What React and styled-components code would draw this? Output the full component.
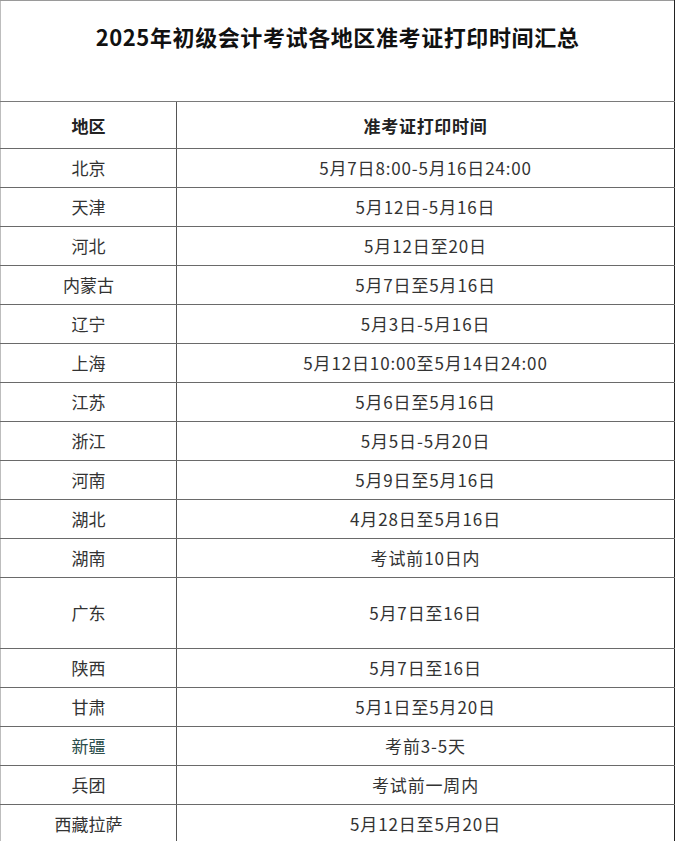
import React from "react"
import styled, { createGlobalStyle } from "styled-components"

const GlobalStyle = createGlobalStyle`
  html, body {
    margin: 0;
    padding: 0;
    background: #ffffff;
  }
  body {
    font-family: "Noto Sans CJK SC", "Noto Sans", sans-serif;
    color: #333333;
  }
`

const Page = styled.div`
  width: 678px;
  height: 841px;
  overflow: hidden;
  background: #ffffff;
`

const Table = styled.table`
  width: 675px;
  border-collapse: collapse;
  table-layout: fixed;
  border-left: 1px solid #bdbdbd;
  border-right: 1px solid #222222;
  border-top: 1px solid #9a9a9a;
`

const TitleCell = styled.th`
  height: 78px;
  padding: 22px 0 0;
  vertical-align: top;
  text-align: center;
  font-size: 22px;
  line-height: 26px;
  font-weight: 700;
  color: #111111;
  letter-spacing: 0.6px;
  border-bottom: 1.5px solid #7a7a7a;
`

const HeadCell = styled.th`
  height: 46px;
  padding: 0;
  text-align: center;
  font-size: 17px;
  font-weight: 600;
  color: #222222;
  letter-spacing: ${(p) => (p.$first ? "0" : "0.7px")};
  border-bottom: 1.5px solid #6a6a6a;
  border-right: ${(p) => (p.$first ? "1.5px solid #555555" : "none")};
`

const Cell = styled.td`
  height: ${(p) => (p.$tall ? "70px" : "38px")};
  padding: 0;
  text-align: center;
  vertical-align: middle;
  font-size: 17px;
  line-height: 20px;
  color: ${(p) => p.$tint || "#333333"};
  letter-spacing: ${(p) => (p.$first ? "0" : "0.85px")};
  border-bottom: 1.5px solid #6a6a6a;
  border-right: ${(p) => (p.$first ? "1.5px solid #555555" : "none")};
`

const rows = [
  ["北京", "5月7日8:00-5月16日24:00"],
  ["天津", "5月12日-5月16日"],
  ["河北", "5月12日至20日"],
  ["内蒙古", "5月7日至5月16日"],
  ["辽宁", "5月3日-5月16日"],
  ["上海", "5月12日10:00至5月14日24:00"],
  ["江苏", "5月6日至5月16日"],
  ["浙江", "5月5日-5月20日"],
  ["河南", "5月9日至5月16日"],
  ["湖北", "4月28日至5月16日"],
  ["湖南", "考试前10日内"],
  ["广东", "5月7日至16日", true],
  ["陕西", "5月7日至16日"],
  ["甘肃", "5月1日至5月20日"],
  ["新疆", "考前3-5天", false, "#2b4d4a"],
  ["兵团", "考试前一周内"],
  ["西藏拉萨", "5月12日至5月20日"],
]

export default function App() {
  return (
    <Page>
      <GlobalStyle />
      <Table>
        <colgroup>
          <col style={{ width: "176px" }} />
          <col />
        </colgroup>
        <thead>
          <tr>
            <TitleCell colSpan={2}>2025年初级会计考试各地区准考证打印时间汇总</TitleCell>
          </tr>
          <tr>
            <HeadCell $first>地区</HeadCell>
            <HeadCell>准考证打印时间</HeadCell>
          </tr>
        </thead>
        <tbody>
          {rows.map(([region, time, tall, tint]) => (
            <tr key={region}>
              <Cell $first $tall={tall} $tint={tint}>
                {region}
              </Cell>
              <Cell $tall={tall}>{time}</Cell>
            </tr>
          ))}
        </tbody>
      </Table>
    </Page>
  )
}
